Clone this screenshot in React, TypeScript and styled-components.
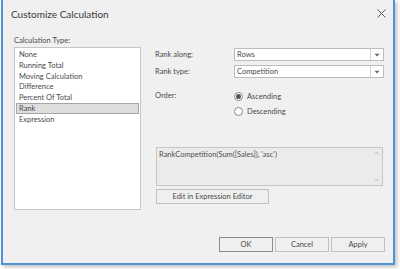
import React from "react";
import styled, { createGlobalStyle } from "styled-components";

const Global = createGlobalStyle`
  html, body { margin: 0; padding: 0; background: #ffffff; }
  body { font-family: Lato, "Noto Sans", sans-serif; }
`;

const Page = styled.div`
  width: 400px;
  height: 269px;
  overflow: hidden;
  padding-left: 1px;
  box-sizing: border-box;
`;

const Window = styled.div`
  width: 394px;
  height: 265px;
  box-sizing: border-box;
  background: #f0f0f0;
  border: 2px solid #4f95d6;
  border-top: 0;
  box-shadow: 2px 2px 4px rgba(0, 0, 0, 0.25);
  display: flex;
  flex-direction: column;
  color: #4a4a4a;
  font-size: 7.5px;
`;

const TitleBar = styled.div`
  height: 28px;
  display: flex;
  align-items: center;
  justify-content: space-between;
  padding: 0 7px 1px 8px;
  box-sizing: border-box;
`;

const Title = styled.div`
  font-size: 10px;
  color: #3a3a3a;
`;

const Content = styled.div`
  flex: 1;
  display: flex;
  padding: 8px 8px 0 11px;
`;

const LeftCol = styled.div`
  width: 127px;
  display: flex;
  flex-direction: column;
`;

const FieldLabel = styled.div`
  height: 10px;
  line-height: 10px;
  margin-bottom: 1px;
`;

const ListBox = styled.div`
  height: 163px;
  box-sizing: border-box;
  background: #ffffff;
  border: 1px solid #c6c6c6;
  padding: 1px 1px;
  display: flex;
  flex-direction: column;
`;

const ListItem = styled.div<{ $selected?: boolean }>`
  height: 10.8px;
  line-height: 10.8px;
  box-sizing: border-box;
  padding-left: 2px;
  background: ${(p) => (p.$selected ? "#dedede" : "transparent")};
  border: 1px solid ${(p) => (p.$selected ? "#a6a6a6" : "transparent")};
`;

const RightCol = styled.div`
  flex: 1;
  margin-left: 14px;
  padding-top: 12px;
  display: flex;
  flex-direction: column;
`;

const Row = styled.div<{ $mb?: number }>`
  display: flex;
  align-items: center;
  margin-bottom: ${(p) => p.$mb ?? 0}px;
`;

const RowLabel = styled.div<{ $top?: boolean }>`
  width: 79px;
  align-self: ${(p) => (p.$top ? "flex-start" : "center")};
`;

const Combo = styled.div`
  width: 150px;
  height: 13px;
  box-sizing: border-box;
  background: #ffffff;
  border: 1px solid #bdbdbd;
  display: flex;
`;

const ComboText = styled.div`
  flex: 1;
  line-height: 11px;
  padding-left: 2px;
`;

const ComboButton = styled.div`
  width: 12px;
  border-left: 1px solid #d4d4d4;
  display: flex;
  align-items: center;
  justify-content: center;
`;

const RadioGroup = styled.div`
  display: flex;
  flex-direction: column;
  gap: 5px;
`;

const RadioRow = styled.div`
  display: flex;
  align-items: center;
  height: 10px;
`;

const RadioCircle = styled.div<{ $checked?: boolean }>`
  width: 9px;
  height: 9px;
  box-sizing: border-box;
  border-radius: 50%;
  border: 1px solid #8a8a8a;
  background: #ffffff;
  margin-right: 4px;
  display: flex;
  align-items: center;
  justify-content: center;
  &::after {
    content: "";
    display: ${(p) => (p.$checked ? "block" : "none")};
    width: 5px;
    height: 5px;
    border-radius: 50%;
    background: #555555;
  }
`;

const Memo = styled.div`
  width: 227px;
  height: 39px;
  margin-left: 1px;
  box-sizing: border-box;
  border: 1px solid #c6c6c6;
  background: #ebebeb;
  display: flex;
  margin-top: 31px;
`;

const MemoText = styled.div`
  flex: 1;
  padding: 2px 2px;
  line-height: 10px;
  color: #505050;
`;

const ScrollBar = styled.div`
  width: 11px;
  display: flex;
  flex-direction: column;
  justify-content: space-between;
  align-items: center;
  padding: 3px 0;
`;

const Button = styled.div<{ $w: number; $default?: boolean }>`
  width: ${(p) => p.$w}px;
  height: 15px;
  box-sizing: border-box;
  border: 1px solid ${(p) => (p.$default ? "#8c8c8c" : "#c0c0c0")};
  background: #efefef;
  display: flex;
  align-items: center;
  justify-content: center;
  color: #4a4a4a;
`;

const EditButton = styled(Button)`
  margin-top: 3px;
  margin-left: 1px;
`;

const Footer = styled.div`
  display: flex;
  justify-content: flex-end;
  gap: 2px;
  padding: 0 8px 11px 0;
`;

const Arrow = () => (
  <svg width="6" height="4" viewBox="0 0 6 4">
    <path d="M0.5 0.8 L5.5 0.8 L3 3.4 Z" fill="#666" />
  </svg>
);

const Chevron = ({ up }: { up?: boolean }) => (
  <svg width="7" height="4" viewBox="0 0 7 4">
    <path
      d={up ? "M1 3.5 L3.5 1 L6 3.5" : "M1 0.5 L3.5 3 L6 0.5"}
      fill="none"
      stroke="#b8b8b8"
      strokeWidth="0.9"
    />
  </svg>
);

const CloseIcon = () => (
  <svg width="9" height="9" viewBox="0 0 9 9">
    <path d="M0.5 0.5 L8.5 8.5 M8.5 0.5 L0.5 8.5" stroke="#555" strokeWidth="1" />
  </svg>
);

const items = [
  "None",
  "Running Total",
  "Moving Calculation",
  "Difference",
  "Percent Of Total",
  "Rank",
  "Expression",
];

export default function App() {
  return (
    <>
      <Global />
      <Page>
        <Window>
          <TitleBar>
            <Title>Customize Calculation</Title>
            <CloseIcon />
          </TitleBar>
          <Content>
            <LeftCol>
              <FieldLabel>Calculation Type:</FieldLabel>
              <ListBox>
                {items.map((it) => (
                  <ListItem key={it} $selected={it === "Rank"}>
                    {it}
                  </ListItem>
                ))}
              </ListBox>
            </LeftCol>
            <RightCol>
              <Row $mb={4}>
                <RowLabel>Rank along:</RowLabel>
                <Combo>
                  <ComboText>Rows</ComboText>
                  <ComboButton>
                    <Arrow />
                  </ComboButton>
                </Combo>
              </Row>
              <Row $mb={13}>
                <RowLabel>Rank type:</RowLabel>
                <Combo>
                  <ComboText>Competition</ComboText>
                  <ComboButton>
                    <Arrow />
                  </ComboButton>
                </Combo>
              </Row>
              <Row>
                <RowLabel $top>Order:</RowLabel>
                <RadioGroup>
                  <RadioRow>
                    <RadioCircle $checked />
                    Ascending
                  </RadioRow>
                  <RadioRow>
                    <RadioCircle />
                    Descending
                  </RadioRow>
                </RadioGroup>
              </Row>
              <Memo>
                <MemoText>RankCompetition(Sum([Sales]), 'asc')</MemoText>
                <ScrollBar>
                  <Chevron up />
                  <Chevron />
                </ScrollBar>
              </Memo>
              <EditButton $w={113}>Edit in Expression Editor</EditButton>
            </RightCol>
          </Content>
          <Footer>
            <Button $w={54} $default>
              OK
            </Button>
            <Button $w={54}>Cancel</Button>
            <Button $w={54}>Apply</Button>
          </Footer>
        </Window>
      </Page>
    </>
  );
}
